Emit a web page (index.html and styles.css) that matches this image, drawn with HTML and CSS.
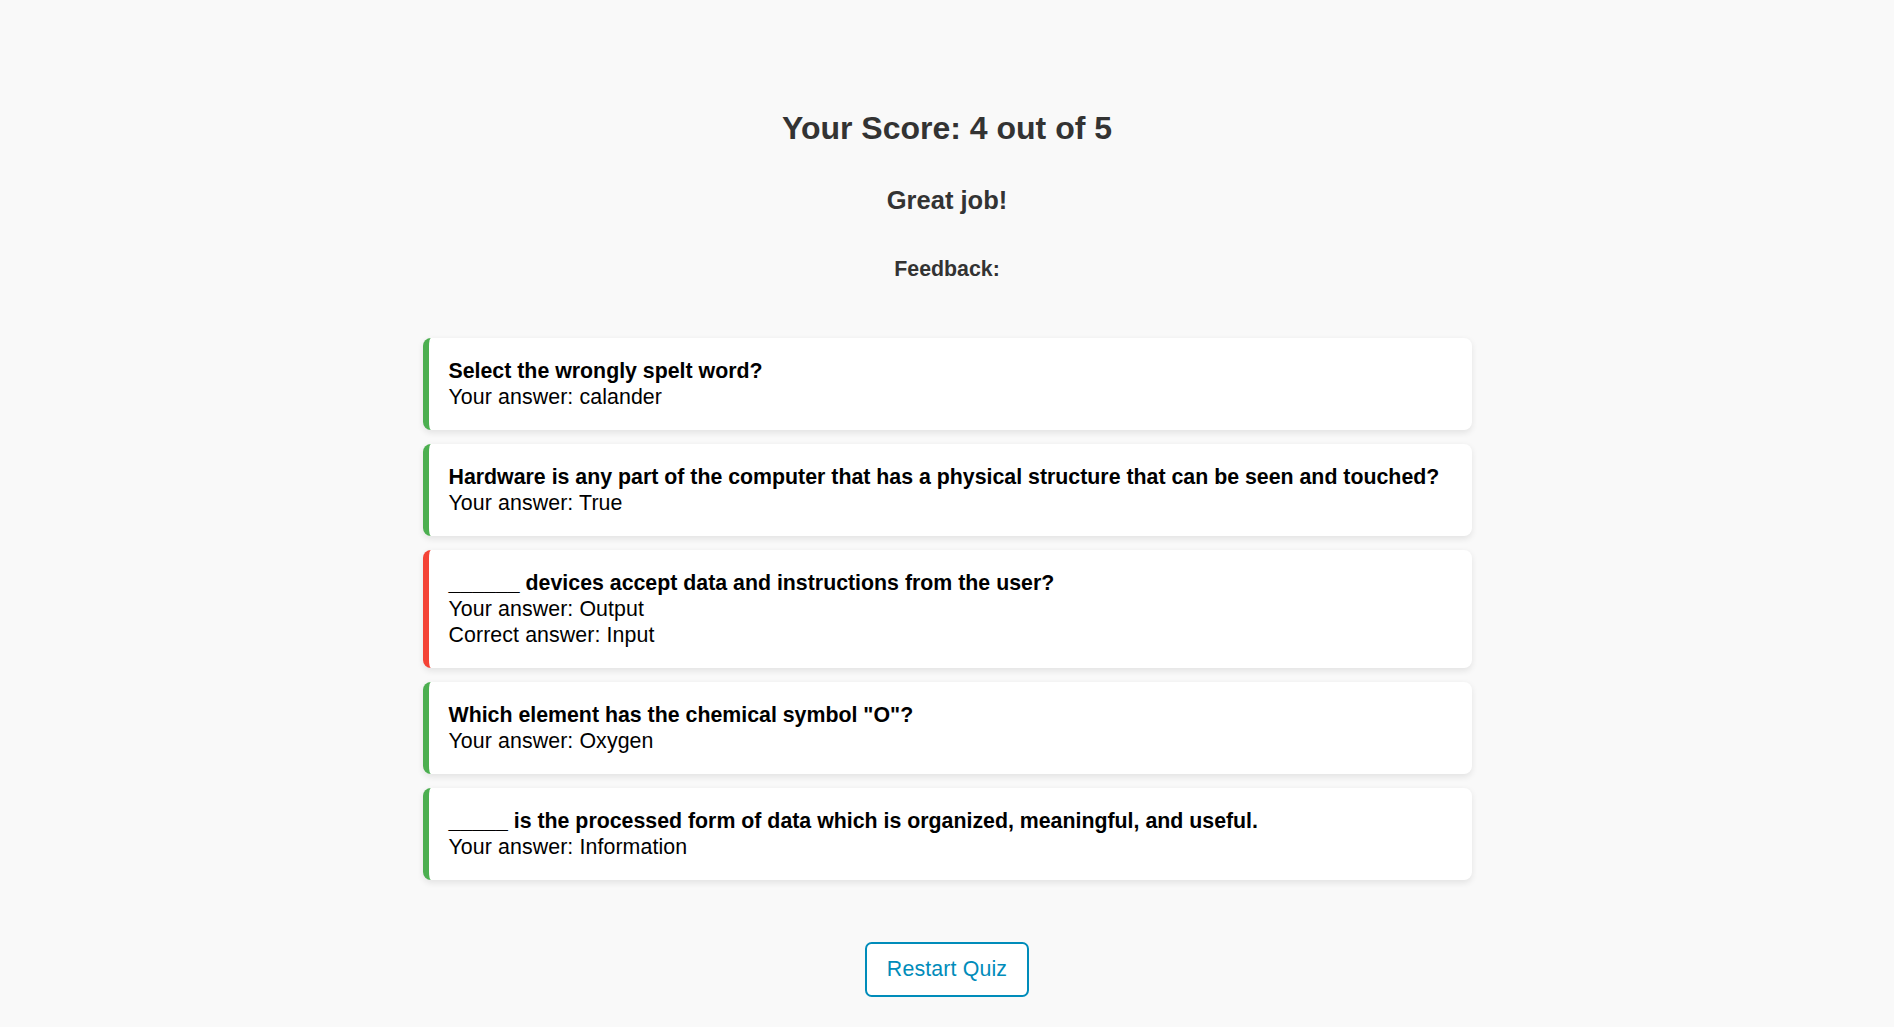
FILE: index.html
```html
<!DOCTYPE html>
<html lang="en">
<head>
<meta charset="utf-8">
<title>Quiz Results</title>
<link rel="stylesheet" href="styles.css">
</head>
<body>
<main class="results">
  <h2 class="score">Your Score: 4 out of 5</h2>
  <h3 class="verdict">Great job!</h3>
  <h4 class="feedback-title">Feedback:</h4>
  <div class="feedback-list">
    <div class="item correct">
      <div class="question">Select the wrongly spelt word?</div>
      <div class="answer">Your answer: calander</div>
    </div>
    <div class="item correct">
      <div class="question">Hardware is any part of the computer that has a physical structure that can be seen and touched?</div>
      <div class="answer">Your answer: True</div>
    </div>
    <div class="item wrong">
      <div class="question">______ devices accept data and instructions from the user?</div>
      <div class="answer">Your answer: Output</div>
      <div class="answer">Correct answer: Input</div>
    </div>
    <div class="item correct">
      <div class="question">Which element has the chemical symbol "O"?</div>
      <div class="answer">Your answer: Oxygen</div>
    </div>
    <div class="item correct">
      <div class="question">_____ is the processed form of data which is organized, meaningful, and useful.</div>
      <div class="answer">Your answer: Information</div>
    </div>
  </div>
  <button class="restart" type="button">Restart Quiz</button>
</main>
</body>
</html>
```

FILE: styles.css
```css
html, body {
  margin: 0;
  padding: 0;
}
body {
  background: #f9f9f9;
  font-family: "Liberation Sans", Arial, sans-serif;
  color: #000;
}
.results {
  display: flex;
  flex-direction: column;
  align-items: center;
  padding-top: 110px;
}
.score {
  margin: 0;
  font-size: 32px;
  line-height: 37px;
  font-weight: bold;
  color: #333;
}
.verdict {
  margin: 39px 0 0;
  font-size: 25.5px;
  line-height: 29px;
  font-weight: bold;
  color: #333;
}
.feedback-title {
  margin: 42px 0 0;
  font-size: 21.33px;
  line-height: 25px;
  font-weight: bold;
  color: #333;
}
.feedback-list {
  width: 1049px;
  margin-top: 56px;
  display: flex;
  flex-direction: column;
  gap: 14px;
}
.item {
  background: #fff;
  border-left: 6.67px solid #4caf50;
  border-radius: 8px;
  padding: 20px 12px 20px 20px;
  box-shadow: 0 2.67px 6.67px rgba(0, 0, 0, 0.09);
  font-size: 21.33px;
  line-height: 26px;
}
.item.wrong {
  border-left-color: #f44336;
}
.question {
  font-weight: bold;
}
.answer {
  letter-spacing: 0.1px;
}
.restart {
  margin-top: 62px;
  font-family: "Liberation Sans", Arial, sans-serif;
  font-size: 21.33px;
  line-height: 24.5px;
  padding: 13.33px 20px;
  color: #008cba;
  background: #fff;
  border: 2.67px solid #008cba;
  border-radius: 6.67px;
  letter-spacing: 0.15px;
  cursor: pointer;
}
```
